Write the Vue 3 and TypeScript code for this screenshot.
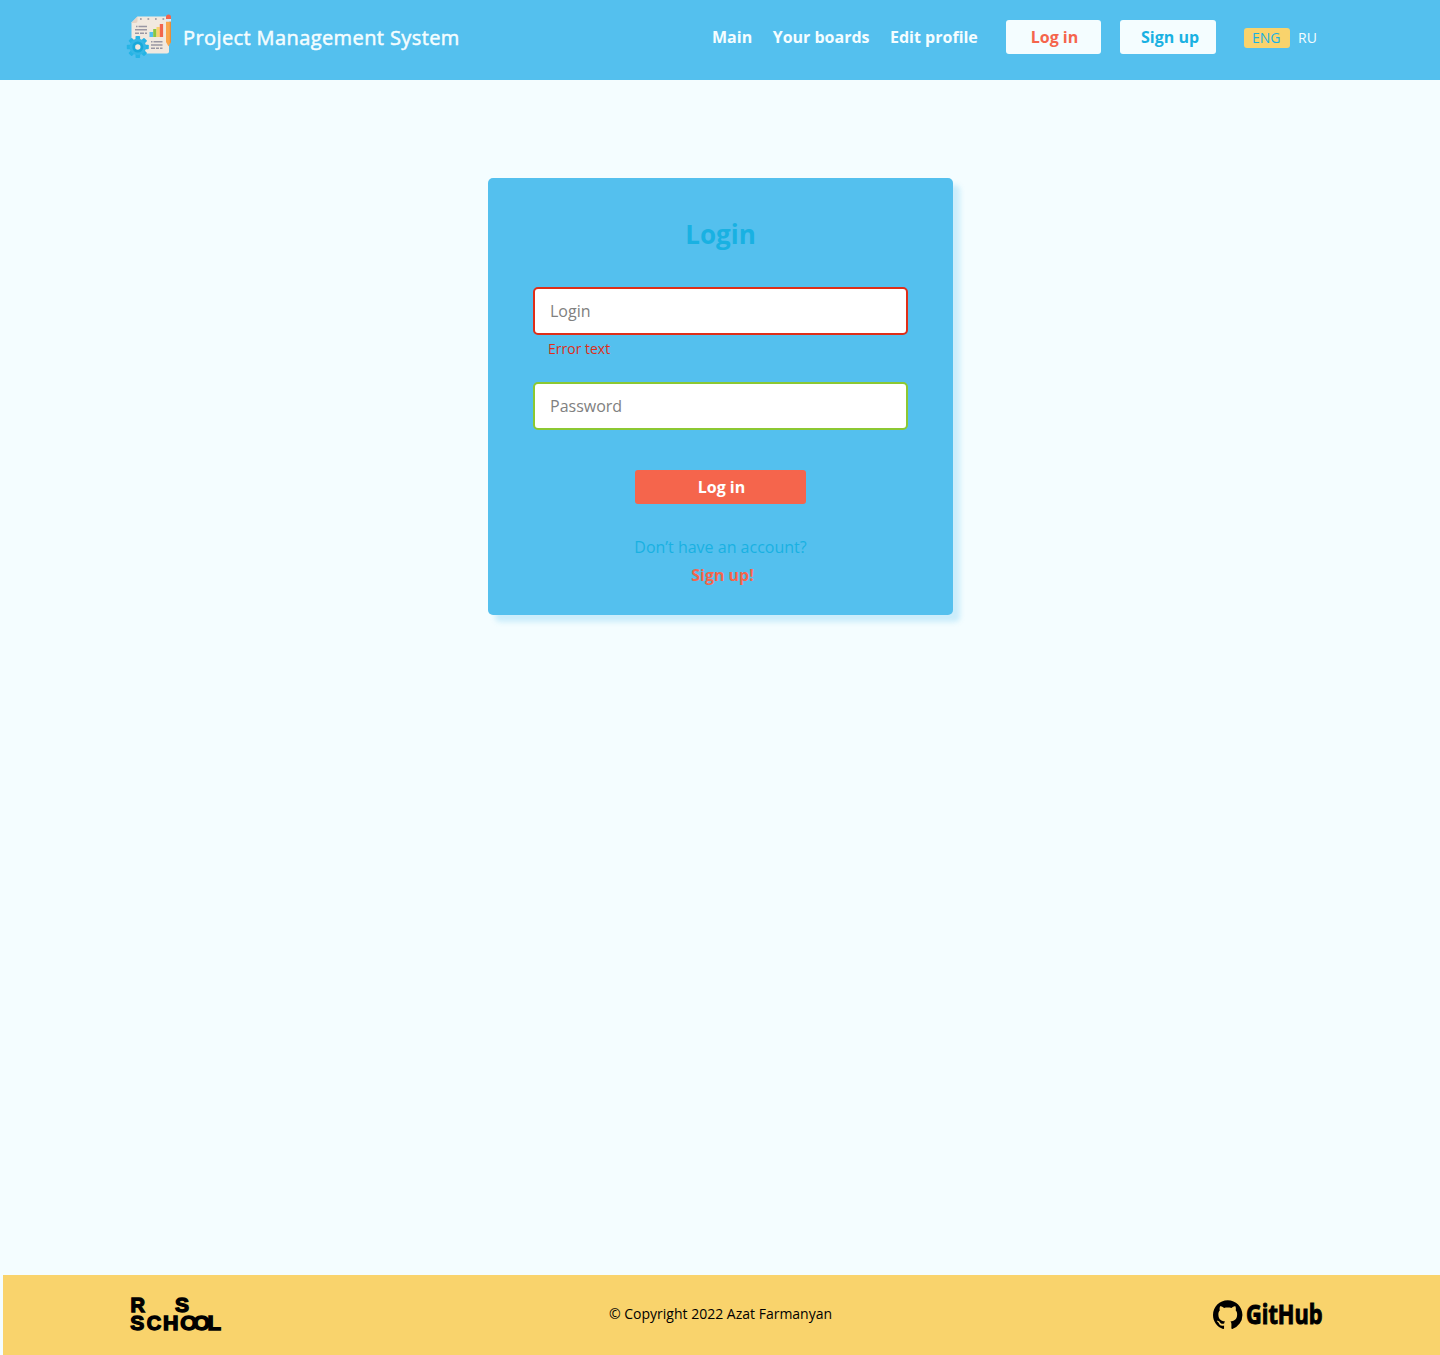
<script setup lang="ts">
import { ref } from 'vue'

interface SchoolLetter {
  char: string
  x: number
  y: number
  width: number
}

const navLinks: string[] = ['Main', 'Your boards', 'Edit profile']
const login = ref('')
const password = ref('')

const schoolLetters: SchoolLetter[] = [
  { char: 'R', x: 0.5, y: 14.3, width: 14.5 },
  { char: 'S', x: 45, y: 14.3, width: 14 },
  { char: 'S', x: 0.3, y: 32.3, width: 14 },
  { char: 'C', x: 16.8, y: 32.3, width: 14.5 },
  { char: 'H', x: 33, y: 32.3, width: 15.5 },
  { char: 'O', x: 50.3, y: 32.3, width: 17 },
  { char: 'O', x: 63, y: 32.3, width: 17 },
  { char: 'L', x: 77.5, y: 32.3, width: 13.5 },
]
const gearTeeth: number[] = [0, 45, 90, 135, 180, 225, 270, 315]
</script>

<template>
  <div class="page">
    <header class="header">
      <svg class="logo" viewBox="0 0 46 46" width="46" height="46">
        <path fill="#f1e9df" d="M11.500 2.500H41Q43 2.500 43 4.500V37.500Q43 39.500 41 39.500H7Q5.500 39.500 5.500 38V8.500Z" />
        <path fill="#e6d3c3" d="M11.500 2.500V7Q11.500 9 9.500 9H5.300Z" />
        <g fill="#a8a5ac">
          <rect x="14" y="4" width="1.700" height="2" /><rect x="21.500" y="4" width="1.700" height="2" />
          <rect x="29" y="4" width="1.700" height="2" /><rect x="36.500" y="4" width="1.700" height="2" />
        </g>
        <g stroke="#9997a3" stroke-width="1.400">
          <path d="M10 12.500h1.500M12.500 12.500H21M9 15.700H21M9 19.200h4M14 19.200h4M19 19.200h2M25 27.800h1.500M27.500 27.800H36.500M25 31H36.500M25 34.300h4M30 34.300h3M34 34.300h2.500" />
        </g>
        <rect x="23.500" y="18" width="3.700" height="5" fill="#54c0ee" />
        <rect x="27.200" y="15" width="3.300" height="8" fill="#8cc63f" />
        <rect x="30.500" y="13" width="3.300" height="10" fill="#f9d16c" />
        <rect x="33.800" y="10" width="3.300" height="13" fill="#f2654c" />
        <path fill="#f9a64a" d="M40 7.500h5v20.500l-2.500 4.500L40 28Z" />
        <path fill="#e58e3b" d="M43.800 7.500H45V28l-1.200 2Z" />
        <path fill="#f2654c" d="M40 5V3Q40 .5 42.500 .5T45 3V5Z" />
        <rect x="40" y="5" width="5" height="2.500" fill="#dceaf2" />
        <g fill="#26b4e5">
          <rect v-for="angle in gearTeeth" :key="angle" x="9.500" y="22" width="4.600" height="6" rx=".8" :transform="`rotate(${angle} 11.800 33)`" />
          <circle cx="11.800" cy="33" r="8.300" fill="#35b7e6" />
          <circle cx="11.800" cy="33" r="5.500" fill="#19a9da" />
        </g>
        <circle cx="11.800" cy="33" r="2.700" fill="#f1e9df" />
      </svg>
      <span class="title">Project Management System</span>
      <nav class="nav">
        <a v-for="link in navLinks" :key="link">{{ link }}</a>
      </nav>
      <button class="btn head-login">Log in</button>
      <button class="btn head-signup">Sign up</button>
      <div class="languages">
        <span class="active">ENG</span>
        <span>RU</span>
      </div>
    </header>

    <main class="main">
      <form class="card" @submit.prevent>
        <h1>Login</h1>
        <input v-model="login" class="invalid" type="text" placeholder="Login" />
        <p class="error">Error text</p>
        <input v-model="password" class="valid" type="password" placeholder="Password" />
        <button class="btn submit">Log in</button>
        <p class="question">Don’t have an account?</p>
        <a class="signup-link">Sign up!</a>
      </form>
    </main>

    <footer class="footer">
      <svg class="school" viewBox="0 0 92 36" width="92" height="36">
        <text v-for="(letter, index) in schoolLetters" :key="index" :x="letter.x" :y="letter.y" :textLength="letter.width" lengthAdjust="spacingAndGlyphs">{{ letter.char }}</text>
      </svg>
      <span class="copyright">© Copyright 2022 Azat Farmanyan</span>
      <svg class="github" viewBox="0 0 110 32" width="110" height="32">
        <path transform="translate(0 1.300) scale(1.840)" d="M8 0C3.580 0 0 3.580 0 8c0 3.540 2.290 6.530 5.470 7.590.4.070.55-.17.55-.38 0-.19-.01-.82-.01-1.490-2.010.37-2.530-.49-2.690-.94-.09-.23-.48-.94-.82-1.130-.28-.15-.68-.52-.01-.53.63-.01 1.080.58 1.230.82.72 1.210 1.870.87 2.330.66.07-.52.28-.87.51-1.070-1.780-.2-3.640-.89-3.640-3.950 0-.87.31-1.590.82-2.150-.08-.2-.36-1.020.08-2.120 0 0 .67-.21 2.200.82.64-.18 1.320-.27 2-.27s1.360.09 2 .27c1.530-1.040 2.200-.82 2.200-.82.44 1.100.16 1.920.08 2.120.51.56.82 1.270.82 2.150 0 3.070-1.870 3.750-3.650 3.950.29.25.54.73.54 1.480 0 1.070-.01 1.930-.01 2.200 0 .21.15.46.55.38A8.010 8.010 0 0 0 16 8c0-4.420-3.580-8-8-8Z" />
        <text x="33" y="24.700" textLength="76.500" lengthAdjust="spacingAndGlyphs">GitHub</text>
      </svg>
    </footer>
  </div>
</template>

<style>
body {
  margin: 0;
}
</style>

<style scoped>
.page {
  display: flex;
  flex-direction: column;
  width: 1440px;
  height: 1355px;
  background: #f4fdff;
  font-family: 'Open Sans', sans-serif;
  font-size: 16px;
  line-height: 22px;
}

.header {
  box-sizing: border-box;
  display: flex;
  align-items: flex-start;
  height: 80px;
  padding-left: 126px;
  background: #54c0ee;
  color: #f4fdff;
}

.logo {
  flex: none;
  margin: 14px 11px 0 0;
  overflow: visible;
}

.title {
  width: 529px;
  margin-top: 24px;
  font-size: 20px;
  font-weight: 400;
  letter-spacing: 0.4px;
  line-height: 28px;
  white-space: nowrap;
  -webkit-text-stroke: 0.5px currentColor;
}

.nav {
  display: flex;
  gap: 20.5px;
  width: 294px;
  margin-top: 26px;
  font-weight: 700;
  white-space: nowrap;
}

.btn {
  box-sizing: border-box;
  flex: none;
  height: 34px;
  padding: 0;
  border: 0;
  border-radius: 3px;
  background: #f4fdff;
  font: 700 16px/22px 'Open Sans', sans-serif;
}

.head-login {
  width: 95px;
  margin: 20px 19px 0 0;
  padding-left: 2px;
  color: #f5654c;
}

.head-signup {
  width: 96px;
  margin: 20px 28px 0 0;
  padding-left: 4px;
  color: #19b1e2;
}

.languages {
  display: flex;
  gap: 8px;
  margin-top: 28px;
  font-size: 14px;
  font-weight: 400;
  line-height: 20px;
}

.languages .active {
  width: 38px;
  padding-left: 8px;
  border-radius: 3px;
  background: #f9d36c;
  color: #19b1e2;
}

.main {
  flex: 1;
  padding-top: 98px;
}

.card {
  box-sizing: border-box;
  display: flex;
  flex-direction: column;
  align-items: center;
  width: 465px;
  height: 437px;
  margin-left: 488px;
  padding: 38px 45px 0;
  border-radius: 5px;
  background: #54c0ee;
  box-shadow: 7px 7px 5px rgba(84, 192, 238, 0.25);
}

h1 {
  height: 36px;
  margin: 0 0 35px;
  color: #19b1e2;
  font-size: 26px;
  font-weight: 700;
  line-height: 36px;
}

input {
  box-sizing: border-box;
  width: 375px;
  height: 48px;
  padding: 0 15px;
  border: 2px solid;
  border-radius: 5px;
  outline: 0;
  background: #fff;
  font: 16px/22px 'Open Sans', sans-serif;
}

input::placeholder {
  color: #808080;
}

.invalid {
  border-color: #df2e18;
}

.valid {
  border-color: #8cc832;
}

.error {
  align-self: flex-start;
  margin: 4px 0 23px 15px;
  color: #df2e18;
  font-size: 14px;
  line-height: 20px;
}

.submit {
  width: 171px;
  margin: 40px 0 32px;
  padding-left: 2px;
  background: #f5654c;
  color: #fff;
}

.question {
  margin: 0 0 6px;
  color: #19b1e2;
}

.signup-link {
  padding-left: 4px;
  color: #f5654c;
  font-weight: 700;
}

.footer {
  box-sizing: border-box;
  display: flex;
  align-items: flex-start;
  height: 80px;
  margin-left: 3px;
  padding: 0 117px 0 127px;
  background: #f9d36c;
}

.school {
  margin-top: 23px;
  overflow: visible;
}

.school text {
  font: 700 19.5px 'Liberation Sans', sans-serif;
  stroke: #000;
  stroke-width: 1.3px;
}

.copyright {
  margin: 29px auto 0 387px;
  font-size: 14px;
  line-height: 20px;
}

.github {
  margin-top: 24px;
  overflow: visible;
}

.github text {
  font: 700 26.5px 'Open Sans', sans-serif;
  stroke: #000;
  stroke-width: 1px;
}
</style>
